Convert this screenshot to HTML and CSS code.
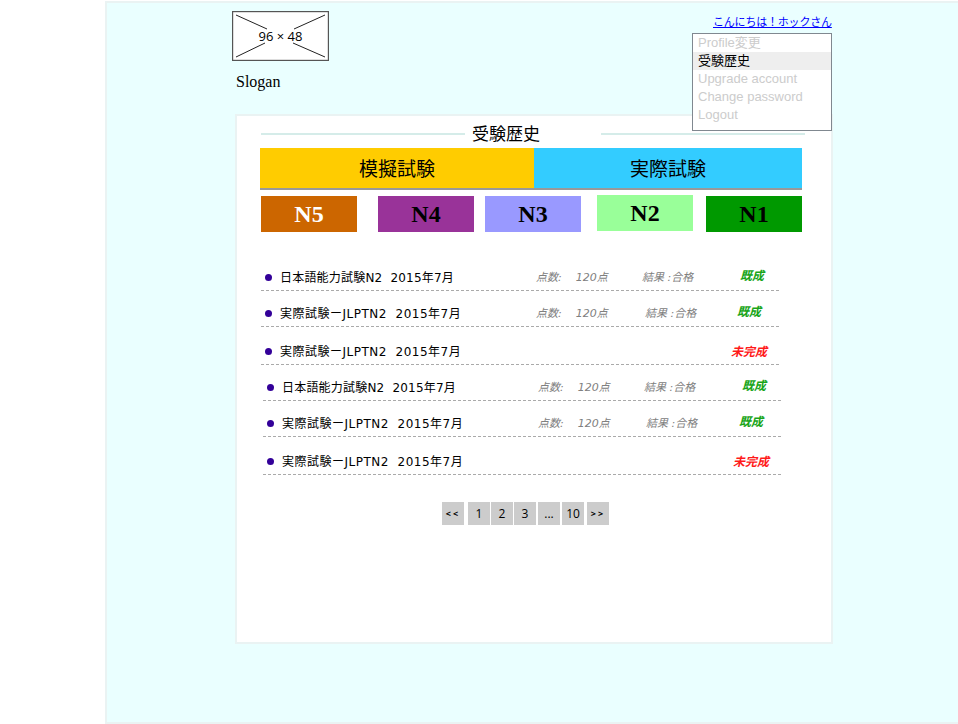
FILE: index.html
```html
<!DOCTYPE html>
<html lang="ja">
<head>
    <meta charset="UTF-8">
    <meta name="viewport" content="width=device-width, initial-scale=1.0">
    <title>受験歴史</title>
    <link rel="stylesheet" href="styles.css">
</head>
<body>
    <div class="page">
        <header class="header">
            <svg class="logo" width="97" height="50" viewBox="0 0 97 50">
                <rect x="0.5" y="0.5" width="96" height="49" fill="#fff" stroke="#555" stroke-width="1.4"/>
                <path d="M4 4 L35 18 M93 4 L62 18 M4 46 L33 32 M93 46 L61 32" stroke="#222" fill="none"/>
                <text x="48.5" y="30" class="logo-text" text-anchor="middle">96 × 48</text>
            </svg>
            <p class="slogan">Slogan</p>
            <a class="greeting" href="#">こんにちは！ホックさん</a>
            <ul class="menu">
                <li>Profile変更</li>
                <li class="active">受験歴史</li>
                <li>Upgrade account</li>
                <li>Change password</li>
                <li>Logout</li>
            </ul>
        </header>

        <main class="panel">
            <div class="title-row">
                <span class="title-line"></span>
                <h1 class="title">受験歴史</h1>
                <span class="title-line"></span>
            </div>

            <div class="tabs">
                <div class="tab tab-mock">模擬試験</div>
                <div class="tab tab-real">実際試験</div>
            </div>

            <div class="levels">
                <div class="level n5">N5</div>
                <div class="level n4">N4</div>
                <div class="level n3">N3</div>
                <div class="level n2">N2</div>
                <div class="level n1">N1</div>
            </div>

            <ul class="results">
                <li class="row">
                    <span class="dot"></span>
                    <span class="name">日本語能力試験N2  2015年7月</span>
                    <span class="score">点数:    120点</span>
                    <span class="result">結果 :合格</span>
                    <span class="status done">既成</span>
                </li>
                <li class="row">
                    <span class="dot"></span>
                    <span class="name name-long">実際試験ーJLPTN2  2015年7月</span>
                    <span class="score">点数:    120点</span>
                    <span class="result moved-2">結果 :合格</span>
                    <span class="status done early">既成</span>
                </li>
                <li class="row tall">
                    <span class="dot"></span>
                    <span class="name name-long">実際試験ーJLPTN2  2015年7月</span>
                    <span class="score"></span>
                    <span class="result"></span>
                    <span class="status todo">未完成</span>
                </li>
                <li class="row shifted">
                    <span class="dot"></span>
                    <span class="name">日本語能力試験N2  2015年7月</span>
                    <span class="score">点数:    120点</span>
                    <span class="result">結果 :合格</span>
                    <span class="status done">既成</span>
                </li>
                <li class="row shifted">
                    <span class="dot"></span>
                    <span class="name name-long">実際試験ーJLPTN2  2015年7月</span>
                    <span class="score">点数:    120点</span>
                    <span class="result moved-1">結果 :合格</span>
                    <span class="status done early">既成</span>
                </li>
                <li class="row tall shifted">
                    <span class="dot"></span>
                    <span class="name name-long">実際試験ーJLPTN2  2015年7月</span>
                    <span class="score"></span>
                    <span class="result"></span>
                    <span class="status todo">未完成</span>
                </li>
            </ul>

            <nav class="pager">
                <a class="arrow" href="#">&lt;&lt;</a>
                <a class="first" href="#">1</a>
                <a href="#">2</a>
                <a href="#">3</a>
                <a class="gap" href="#">...</a>
                <a class="gap" href="#">10</a>
                <a class="arrow last" href="#">&gt;&gt;</a>
            </nav>
        </main>
    </div>
</body>
</html>
```

FILE: styles.css
```css
html, body {
    margin: 0;
    padding: 0;
    height: 724px;
    overflow: hidden;
    background-color: #FFFFFF;
}
body {
    font-family: "Liberation Serif", "Noto Sans CJK JP", serif;
    color: #000000;
}
ul {
    list-style: none;
    margin: 0;
    padding: 0;
}

/* canvas runs off the right edge of the window */
.page {
    position: relative;
    box-sizing: border-box;
    width: 900px;
    height: 723px;
    margin: 1px 0 0 105px;
    border: 2px solid #EAF3F3;
    background-color: #EAFFFF;
}

.header {
    height: 111px;
    padding: 8px 0 0 125px;
    box-sizing: border-box;
}
.logo {
    display: block;
}
.logo-text {
    font-family: "Open Sans", sans-serif;
    font-size: 13px;
    fill: #000000;
}
.slogan {
    margin: 12px 0 0 4px;
    font-size: 16px;
    line-height: 18px;
}
.greeting {
    position: absolute;
    top: 10px;
    left: 606px;
    font-family: "Noto Sans CJK JP", sans-serif;
    font-size: 11px;
    line-height: 16px;
    letter-spacing: -0.2px;
    white-space: nowrap;
    color: #0000FF;
}
.menu {
    position: absolute;
    z-index: 2;
    top: 30px;
    left: 585px;
    box-sizing: border-box;
    width: 140px;
    height: 98px;
    border: 1px solid #808890;
    background-color: #FFFFFF;
    font-family: "Liberation Sans", "Noto Sans CJK JP", sans-serif;
    font-size: 13px;
    color: #CCCCCC;
}
.menu li {
    height: 18px;
    line-height: 18px;
    padding-left: 5px;
}
.menu .active {
    background-color: #EEEEEE;
    color: #000000;
}

.panel {
    box-sizing: border-box;
    width: 598px;
    height: 530px;
    margin-left: 128px;
    padding-top: 7px;
    border: 2px solid #EAF3F3;
    background-color: #FFFFFF;
}

.title-row {
    display: flex;
    align-items: center;
    height: 22px;
    margin-left: 24px;
}
.title-line {
    width: 204px;
    height: 2px;
    background-color: #D5ECE9;
}
.title {
    box-sizing: border-box;
    width: 136px;
    margin: 0;
    padding: 0 0 2px 7px;
    font-family: "Noto Sans CJK JP", sans-serif;
    font-size: 17px;
    font-weight: normal;
    line-height: 20px;
}

.tabs {
    display: flex;
    width: 542px;
    height: 40px;
    margin: 3px 0 0 23px;
    border-bottom: 2px solid #999999;
}
.tab {
    font-family: "Noto Sans CJK JP", sans-serif;
    font-size: 19px;
    line-height: 39px;
    text-align: center;
}
.tab-mock {
    width: 274px;
    background-color: #FFCC00;
}
.tab-real {
    width: 268px;
    background-color: #33CCFF;
}

.levels {
    display: flex;
    margin: 6px 0 0 24px;
}
.level {
    width: 96px;
    height: 36px;
    font-size: 24px;
    font-weight: bold;
    line-height: 37px;
    text-align: center;
}
.n5 {
    background-color: #CC6600;
    color: #FFFFFF;
}
.n4 {
    margin-left: 21px;
    background-color: #993399;
}
.n3 {
    margin-left: 11px;
    background-color: #9999FF;
}
.n2 {
    margin: -1px 0 0 16px;
    background-color: #99FF99;
}
.n1 {
    margin-left: 13px;
    background-color: #009900;
}

.results {
    width: 518px;
    margin: 22px 0 0 24px;
    font-family: "DejaVu Sans", "Noto Sans CJK JP", sans-serif;
}
.row {
    display: flex;
    align-items: flex-end;
    box-sizing: border-box;
    width: 518px;
    height: 36px;
    padding: 0 0 4px 4px;
    border-bottom: 1px dashed #AAAAAA;
}
.row:first-child {
    height: 37px;
}
.row.tall {
    height: 38px;
}
.row.shifted {
    margin-left: 2px;
}
.dot {
    width: 7px;
    height: 7px;
    margin: 0 8px 5px 0;
    border-radius: 50%;
    background-color: #330099;
}
.name {
    width: 256px;
    font-size: 12px;
    line-height: 16px;
    letter-spacing: 0.2px;
    white-space: pre;
}
.name-long {
    letter-spacing: 0.5px;
}
.score, .result {
    font-size: 11px;
    font-style: italic;
    line-height: 16px;
    white-space: pre;
    color: #808080;
}
.score {
    width: 106px;
}
.result {
    width: 98px;
}
.moved-1 {
    margin-left: 2px;
    width: 96px;
}
.moved-2 {
    margin-left: 3px;
    width: 95px;
}
.status {
    font-size: 12px;
    font-style: italic;
    font-weight: bold;
    line-height: 16px;
    white-space: nowrap;
}
.done {
    margin-bottom: 2px;
    color: #19A519;
}
.early {
    margin-left: -3px;
}
.todo {
    margin-left: -9px;
    color: #FF1A1A;
}

.pager {
    display: flex;
    margin: 27px 0 0 205px;
    font-family: "Open Sans", sans-serif;
    font-size: 12px;
    line-height: 23px;
    text-align: center;
}
.pager a {
    width: 22px;
    height: 23px;
    margin-left: 1px;
    background-color: #CCCCCC;
    color: #000000;
    text-decoration: none;
}
.pager .arrow {
    margin-left: 0;
    font-size: 9px;
    font-weight: bold;
    letter-spacing: 2px;
}
.pager .first {
    margin-left: 4px;
}
.pager .gap {
    margin-left: 2px;
}
.pager .last {
    margin-left: 3px;
}
```
